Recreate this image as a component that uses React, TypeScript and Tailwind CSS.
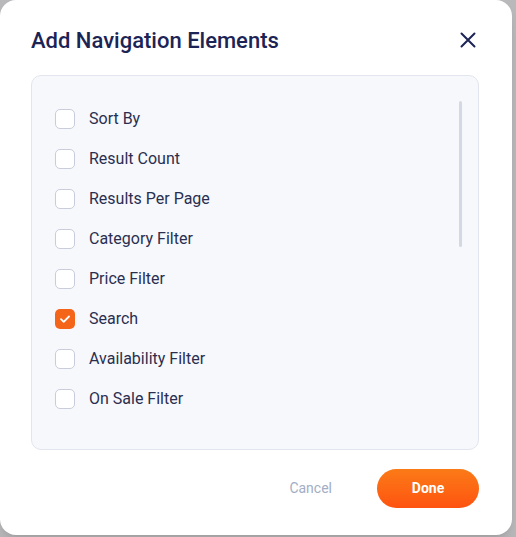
import { useState } from "react";

const items = [
  "Sort By",
  "Result Count",
  "Results Per Page",
  "Category Filter",
  "Price Filter",
  "Search",
  "Availability Filter",
  "On Sale Filter",
];

export default function App() {
  const [checked, setChecked] = useState<string[]>(["Search"]);

  const toggle = (name: string) => {
    setChecked((prev) =>
      prev.includes(name) ? prev.filter((n) => n !== name) : [...prev, name]
    );
  };

  return (
    <div className="h-[537px] w-[516px] bg-[#b9b9bb] font-['Roboto',sans-serif]">
      <div className="flex h-[535px] w-[512px] flex-col rounded-2xl bg-white pl-[31px] pr-[33px] shadow-lg">
        {/* Header */}
        <div className="flex h-[75px] items-center justify-between pt-[5px]">
          <h2 className="text-[22px] font-medium text-[#1c2456]">
            Add Navigation Elements
          </h2>
          <button className="mr-[1px] text-[#1c2456]">
            <svg width="20" height="20" viewBox="0 0 20 20" fill="none">
              <path
                d="M3.5 3.5l13 13M16.5 3.5l-13 13"
                stroke="currentColor"
                strokeWidth="2"
                strokeLinecap="round"
              />
            </svg>
          </button>
        </div>

        {/* List */}
        <div className="relative h-[375px] rounded-[10px] border border-[#e2e5ee] bg-[#f7f8fc] px-[23px] pt-[23px]">
          <div className="flex flex-col">
            {items.map((name) => {
              const on = checked.includes(name);
              return (
                <label
                  key={name}
                  className="flex h-[40px] cursor-pointer items-center gap-[14px]"
                  onClick={() => toggle(name)}
                >
                  {on ? (
                    <span className="flex h-[20px] w-[20px] items-center justify-center rounded-[5px] bg-[#f4651a]">
                      <svg width="12" height="12" viewBox="0 0 12 12" fill="none">
                        <path
                          d="M2 6.2l2.7 2.6L10 3.5"
                          stroke="white"
                          strokeWidth="1.8"
                          strokeLinecap="round"
                          strokeLinejoin="round"
                        />
                      </svg>
                    </span>
                  ) : (
                    <span className="h-[20px] w-[20px] rounded-[5px] border border-[#c9cddb] bg-white" />
                  )}
                  <span className="text-[16px] font-normal text-[#2a2f50]">{name}</span>
                </label>
              );
            })}
          </div>
          <div className="absolute right-[16px] top-[25px] h-[146px] w-[3px] rounded-full bg-[#d4d8e3]" />
        </div>

        {/* Footer */}
        <div className="flex flex-1 items-center justify-end gap-[45px] pb-[8px]">
          <button className="text-[14px] font-normal text-[#a3adc4]">Cancel</button>
          <button className="h-[39px] w-[102px] rounded-full bg-gradient-to-b from-[#fb7a17] to-[#fe5210] text-[14px] font-bold text-white">
            Done
          </button>
        </div>
      </div>
    </div>
  );
}
